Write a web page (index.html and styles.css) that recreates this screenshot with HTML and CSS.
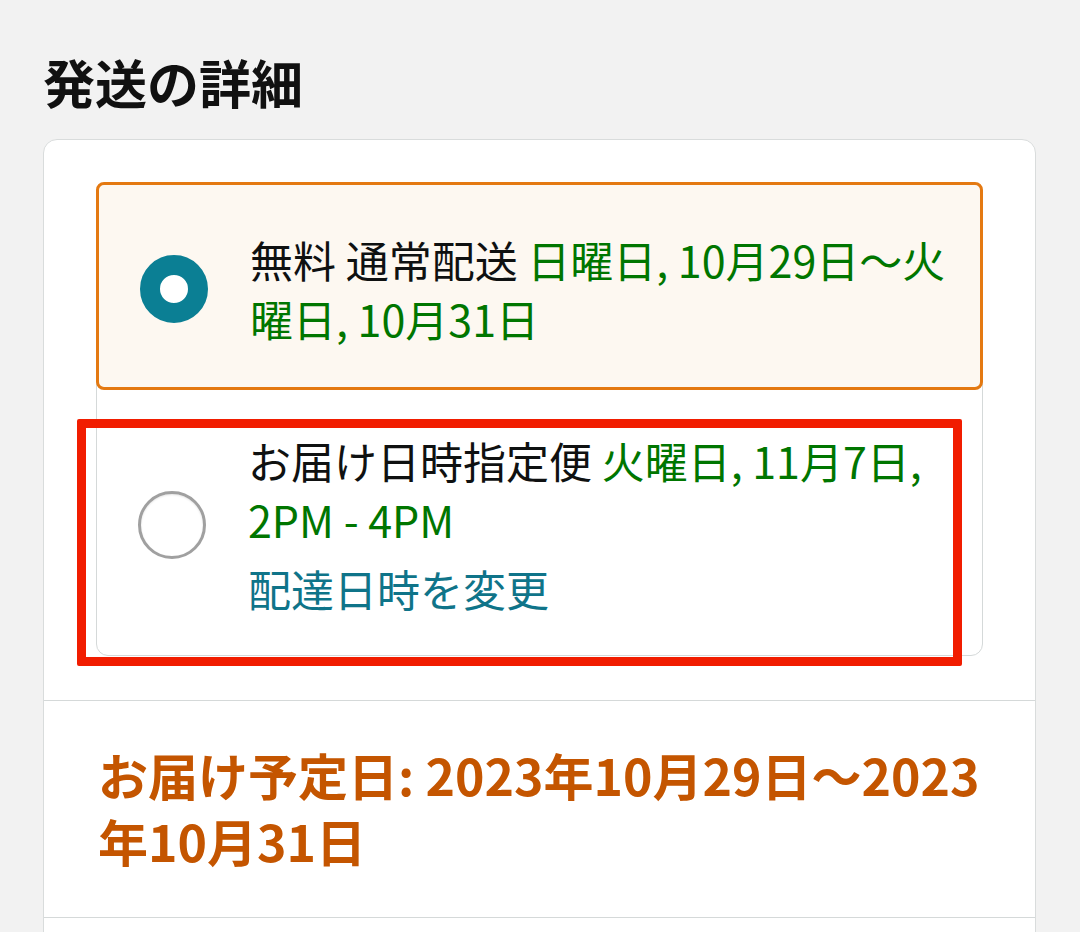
FILE: index.html
```html
<!DOCTYPE html>
<html lang="ja">
<head>
    <meta charset="UTF-8">
    <meta name="viewport" content="width=device-width, initial-scale=1.0">
    <title>発送の詳細</title>
    <link rel="stylesheet" href="styles.css">
</head>
<body>

    <div class="page">
        <h1 class="page-title">発送の詳細</h1>

        <div class="shipping-card">
            <div class="options-section">
                <div class="options">
                    <label class="option selected">
                        <span class="radio"></span>
                        <span class="option-text">
                            無料 通常配送 <span class="date">日曜日, 10月29日～火曜日, 10月31日</span>
                        </span>
                    </label>
                    <label class="option">
                        <span class="radio"></span>
                        <span class="option-text">
                            お届け日時指定便 <span class="date">火曜日, 11月7日, 2PM - 4PM</span>
                            <a class="change-link" href="#">配達日時を変更</a>
                        </span>
                        <!-- annotation frame drawn over the option -->
                        <span class="highlight"></span>
                    </label>
                </div>
            </div>

            <div class="estimate-section">
                <p class="estimate">お届け予定日: 2023年10月29日～2023年10月31日</p>
            </div>

            <div class="next-section"></div>
        </div>
    </div>

</body>
</html>
```

FILE: styles.css
```css
body {
    margin: 0;
    background-color: #f2f2f2;
    font-family: "Noto Sans CJK JP", "Noto Sans", sans-serif;
    color: #0f1111;
}
.page {
    padding: 0 44px 0 43px;
}
.page-title {
    font-size: 52px;
    font-weight: bold;
    line-height: 60px;
    margin: 52px 0 27px 0;
    color: #111;
}
.shipping-card {
    background-color: white;
    border: 1px solid #d9dcdc;
    border-radius: 14px;
}
.options-section {
    padding: 42px 52px 44px 52px;
}
.options {
    border: 1px solid #d5d9d9;
    border-radius: 12px;
}
.option {
    position: relative;
    display: flex;
    align-items: center;
    gap: 42px;
    padding: 41px 20px 37px 41px;
    font-size: 43px;
    line-height: 59px;
    cursor: pointer;
}
.option.selected {
    margin: -1px -1px 0 -1px;
    padding: 45px 21px 39px 41px;
    background-color: #fdf8f1;
    border: 3px solid #e47911;
    border-radius: 8px;
}
.radio {
    flex: none;
    width: 68px;
    height: 68px;
    box-sizing: border-box;
    border-radius: 50%;
    border: 3px solid #a0a0a0;
    background-color: white;
    box-shadow: inset 0 1px 2px rgba(0, 0, 0, 0.1);
}
.option.selected .radio {
    border: 20px solid #0b7f94;
    box-shadow: none;
}
.option-text {
    flex: 1;
}
.date {
    color: #007600;
}
.change-link {
    display: block;
    margin-top: 10px;
    color: #0f7489;
    text-decoration: none;
}
.highlight {
    position: absolute;
    left: -20px;
    top: 29px;
    right: 20px;
    bottom: -11px;
    border: 9px solid #f11d00;
    border-radius: 2px;
    pointer-events: none;
}
.estimate-section {
    border-top: 1px solid #d5d9d9;
    padding: 40px 30px 44px 54px;
}
.estimate {
    margin: 0;
    font-size: 50px;
    font-weight: bold;
    line-height: 66px;
    color: #c45500;
}
.next-section {
    border-top: 1px solid #d5d9d9;
    height: 120px;
}
```
